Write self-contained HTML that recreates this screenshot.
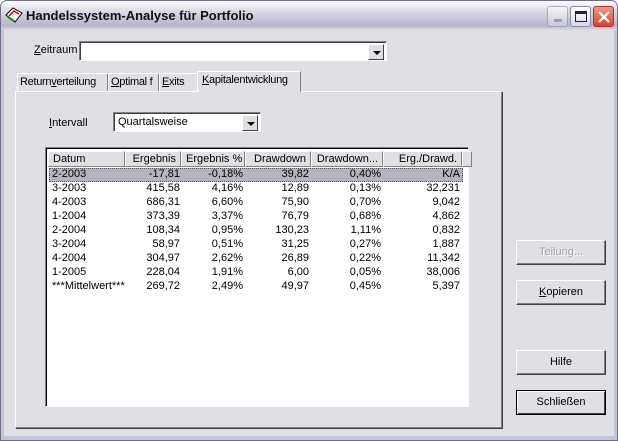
<!DOCTYPE html>
<html><head><meta charset="utf-8"><style>
*{box-sizing:border-box;margin:0;padding:0}
body{width:618px;height:441px;overflow:hidden;background:#fff;font-family:"Liberation Sans",Tahoma,sans-serif;font-size:11px;color:#000}
.win{position:absolute;left:0;top:0;width:618px;height:441px;background:#e0dfe3;border:1px solid #6f6e8a;border-radius:7px 7px 0 0;overflow:hidden}
.title{position:absolute;left:0;top:0;width:618px;height:29px;background:linear-gradient(#fdfdfe 0%,#e4e3ec 25%,#c8c7d7 60%,#b6b5c8 85%,#dcdce6 100%)}
.title span{position:absolute;left:25px;top:7px;font-weight:bold;font-size:13px;color:#111}
.frame{position:absolute;left:0;top:29px;width:616px;height:410px;border:3px solid #c6c5d7;border-top:none;border-bottom-width:4px}
.abs{position:absolute}
.tb{position:absolute;top:5px;width:21px;height:21px;border-radius:3px;border:1px solid #8d8ca8;background:linear-gradient(#fff,#d8d8e4)}
.combo{position:absolute;background:#fff;border:1px solid;border-color:#808080 #fff #fff #808080;box-shadow:inset 1px 1px 0 #404040}
.arr{position:absolute;right:2px;top:2px;width:16px;height:16px;background:#e0dfe3;border:1px solid;border-color:#fff #404040 #404040 #fff}
.arr:after{content:"";position:absolute;left:4px;top:6px;border:4px solid transparent;border-top:4px solid #000;border-bottom:0}
.tab{position:absolute;top:72px;height:19px;border:1px solid;border-color:#fff #808080 transparent #fff;padding:2px 2px;background:#e0dfe3;white-space:nowrap;letter-spacing:-0.3px;overflow:hidden}
.panel{position:absolute;left:14px;top:90px;width:487px;height:337px;border:1px solid;border-color:#fff #808080 #808080 #fff;box-shadow:1px 1px 0 #404040}
.list{position:absolute;left:44px;top:146px;width:424px;height:260px;background:#fff;border:1px solid;border-color:#808080 #fff #fff #808080;box-shadow:inset 1px 1px 0 #000}
.hd{position:absolute;top:3px;height:16px;border:1px solid;border-color:#fff #808080 #808080 #fff;background:#e0dfe3;padding:1px 4px;white-space:nowrap;overflow:hidden}
.row{position:absolute;left:3px;width:414px;height:14px}
.c{position:absolute;top:0;text-align:right;white-space:nowrap}
.btn{position:absolute;left:515px;width:90px;height:25px;background:#e0dfe3;border:1px solid;border-color:#fff #404040 #404040 #fff;box-shadow:inset -1px -1px 0 #808080;text-align:center;line-height:22px}
u{text-decoration:underline}
</style></head><body>
<div class="win">
<div class="title">
<svg class="abs" style="left:4px;top:6px" width="18" height="17" viewBox="0 0 18 17"><path d="M1 8 L8 1 L17 6 L10 15 Z" fill="#fff" stroke="#000"/><path d="M4 9 L9 4 L14 7" fill="none" stroke="#d00" stroke-width="1.5"/><path d="M3 10 L9 14" stroke="#090" stroke-width="2"/></svg>
<span>Handelssystem-Analyse für Portfolio</span>
<div class="tb" style="left:546px;opacity:.6"><div class="abs" style="left:6px;top:12px;width:8px;height:3px;background:#889"></div></div>
<div class="tb" style="left:569px"><div class="abs" style="left:4px;top:4px;width:12px;height:11px;border:1px solid #223;border-top-width:3px"></div></div>
<div class="tb" style="left:592px;background:linear-gradient(#f19a88,#d2452d);border-color:#a33"><svg class="abs" style="left:3px;top:3px" width="14" height="14"><path d="M2 2L12 12M12 2L2 12" stroke="#fff" stroke-width="2.2"/></svg></div>
</div>
<div class="frame"></div>
<div class="abs" style="left:33px;top:43px"><u>Z</u>eitraum</div>
<div class="combo" style="left:78px;top:40px;width:308px;height:20px"><div class="arr"></div></div>
<div class="tab" style="left:16px;width:91px"><span>Return<u>v</u>erteilung</span></div>
<div class="tab" style="left:107px;width:51px"><u>O</u>ptimal f</div>
<div class="tab" style="left:158px;width:39px"><u>E</u>xits</div>
<div class="panel"></div>
<div class="tab" style="left:196px;top:70px;width:104px;height:21px;z-index:2;border-bottom:none;padding-left:4px"><u>K</u>apitalentwicklung</div>
<div class="abs" style="left:48px;top:116px"><u>I</u>ntervall</div>
<div class="combo" style="left:112px;top:111px;width:148px;height:20px"><span class="abs" style="left:4px;top:3px">Quartalsweise</span><div class="arr"></div></div>
<div class="list">
<div class="hd" style="left:2px;width:77px">Datum</div>
<div class="hd" style="left:79px;width:56px;text-align:right">Ergebnis</div>
<div class="hd" style="left:135px;width:64px;text-align:right">Ergebnis %</div>
<div class="hd" style="left:199px;width:66px;text-align:right">Drawdown</div>
<div class="hd" style="left:265px;width:72px;text-align:right">Drawdown...</div>
<div class="hd" style="left:337px;width:79px;text-align:right">Erg./Drawd.</div>
<div class="hd" style="left:416px;width:6px"></div>
<div id="rows"></div>
</div>
<div class="btn" style="top:239px;color:#a0a0a0;text-shadow:1px 1px 0 #fff">Teilung...</div>
<div class="btn" style="top:279px"><u>K</u>opieren</div>
<div class="btn" style="top:349px">Hilfe</div>
<div class="btn" style="top:389px;border:1px solid #000;box-shadow:inset 1px 1px 0 #fff,inset -1px -1px 0 #404040">Schließen</div>
</div>
<script>
var d=[["2-2003","-17,81","-0,18%","39,82","0,40%","K/A"],["3-2003","415,58","4,16%","12,89","0,13%","32,231"],["4-2003","686,31","6,60%","75,90","0,70%","9,042"],["1-2004","373,39","3,37%","76,79","0,68%","4,862"],["2-2004","108,34","0,95%","130,23","1,11%","0,832"],["3-2004","58,97","0,51%","31,25","0,27%","1,887"],["4-2004","304,97","2,62%","26,89","0,22%","11,342"],["1-2005","228,04","1,91%","6,00","0,05%","38,006"],["***Mittelwert***","269,72","2,49%","49,97","0,45%","5,397"]];
var R=[134,197,263,335,414],h="";
d.forEach(function(r,i){h+='<div class="row" style="top:'+(20+i*14)+'px;'+(i==0?'background:#b2b4bf;outline:1px dotted #555;outline-offset:-1px':'')+'"><span class="c" style="left:3px;text-align:left">'+r[0]+'</span>';
for(var j=1;j<6;j++)h+='<span class="c" style="right:'+(417-R[j-1])+'px">'+r[j]+'</span>';h+='</div>';});
document.getElementById("rows").outerHTML=h;
</script>
</body></html>
